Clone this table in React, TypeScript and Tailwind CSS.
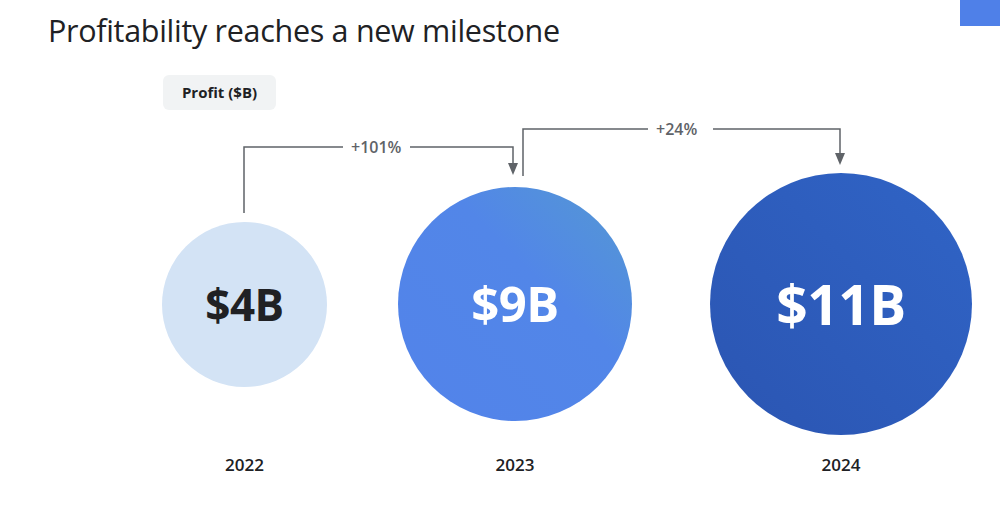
const bubbles = [
  {
    year: "2022",
    value: "$4B",
    size: "w-[165px] h-[165px]",
    fill: "bg-[#d3e3f5] text-[#202124] text-[44px]",
    col: "w-[165px]",
  },
  {
    year: "2023",
    value: "$9B",
    size: "w-[234px] h-[234px]",
    fill: "bg-linear-to-tr from-[#5283ea] via-[#5286e8] via-60% to-[#5598d2] text-white text-[49px]",
    col: "w-[234px]",
  },
  {
    year: "2024",
    value: "$11B",
    size: "w-[262px] h-[262px]",
    fill: "bg-linear-to-tr from-[#2b55b2] to-[#3064c6] text-white text-[55px]",
    col: "w-[262px]",
  },
];

const Connectors = () => (
  <svg
    className="pointer-events-none absolute left-0 top-0"
    width="1000"
    height="505"
    viewBox="0 0 1000 505"
    fill="none"
  >
    <g stroke="#5f6368" strokeWidth="1.5">
      {/* 2022 -> 2023 */}
      <path d="M244 213V147H343M410 147H513V166" />
      {/* 2023 -> 2024 */}
      <path d="M523 176V129H648M713 129H840V156" />
    </g>
    <g fill="#5f6368">
      <path d="M508 163h10l-5 12z" />
      <path d="M835 153h10l-5 12z" />
    </g>
  </svg>
);

export default function App() {
  return (
    <div
      className="relative h-[505px] w-[1000px] overflow-hidden bg-white text-[#202124]"
      style={{ fontFamily: "'Open Sans', 'Liberation Sans', sans-serif" }}
    >
      {/* corner accent */}
      <div className="absolute right-0 top-0 h-[26px] w-[40px] bg-[#4f80e8]" />

      <Connectors />

      <h1 className="pl-[48px] pt-[10px] text-[30.5px] font-normal leading-[40px] tracking-[-0.3px] text-[#202124]">
        Profitability reaches a new milestone
      </h1>

      <div className="ml-[163px] mt-[25px] flex h-[35px] w-[113px] items-center justify-center rounded-md bg-[#f1f3f4] text-[15px] font-bold text-[#202124]">
        Profit ($B)
      </div>

      {/* +% labels */}
      <div className="relative h-[63px]">
        <span className="absolute left-[351px] top-[25px] text-[16px] font-semibold text-[#5f6368]">
          +101%
        </span>
        <span className="absolute left-[656px] top-[7px] text-[16px] font-semibold text-[#5f6368]">
          +24%
        </span>
      </div>

      {/* bubbles */}
      <div className="flex pl-[162px]">
        {bubbles.map((b, i) => (
          <div
            key={b.year}
            className={`flex flex-col items-center ${b.col} ${i === 1 ? "ml-[71px]" : ""} ${i === 2 ? "ml-[78px]" : ""}`}
          >
            <div className="flex h-[262px] items-center">
              <div
                className={`flex items-center justify-center rounded-full font-bold tracking-[-0.5px] ${b.size} ${b.fill}`}
              >
                {b.value}
              </div>
            </div>
            <div className="mt-[17px] text-[17px] font-semibold text-[#202124]">
              {b.year}
            </div>
          </div>
        ))}
      </div>
    </div>
  );
}
